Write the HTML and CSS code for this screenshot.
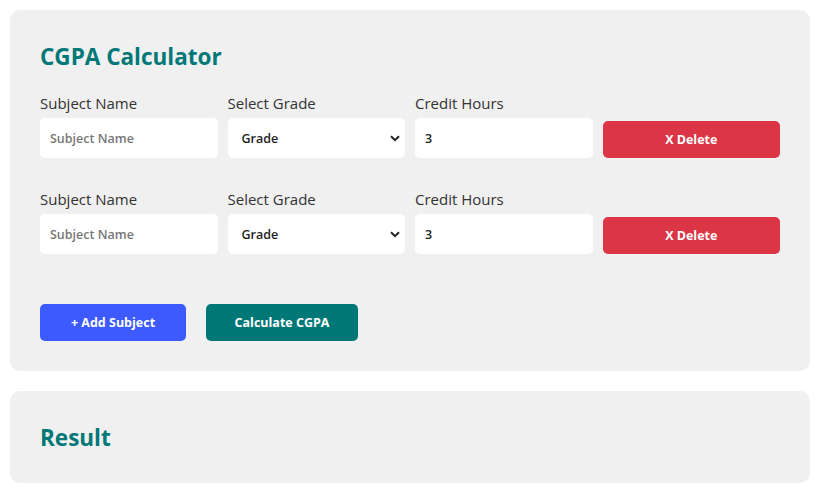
FILE: index.html
```html
<!DOCTYPE html>
<html lang="en">
<head>
<meta charset="utf-8">
<title>CGPA Calculator</title>
<link rel="stylesheet" href="styles.css">
</head>
<body>
<div class="card">
  <h2 class="title title-main">CGPA Calculator</h2>
  <div class="rows">
    <div class="row">
      <div class="field">
        <label class="label">Subject Name</label>
        <input class="control" type="text" placeholder="Subject Name">
      </div>
      <div class="field">
        <label class="label">Select Grade</label>
        <div class="select-wrap">
          <select class="control select"><option>Grade</option></select>
          <svg class="chevron" width="10" height="7" viewBox="0 0 10 7"><path d="M1 1.2 L5 5.2 L9 1.2" fill="none" stroke="#222" stroke-width="2"/></svg>
        </div>
      </div>
      <div class="field">
        <label class="label">Credit Hours</label>
        <input class="control" type="number" value="3">
      </div>
      <button class="btn btn-delete">X Delete</button>
    </div>
    <div class="row">
      <div class="field">
        <label class="label">Subject Name</label>
        <input class="control" type="text" placeholder="Subject Name">
      </div>
      <div class="field">
        <label class="label">Select Grade</label>
        <div class="select-wrap">
          <select class="control select"><option>Grade</option></select>
          <svg class="chevron" width="10" height="7" viewBox="0 0 10 7"><path d="M1 1.2 L5 5.2 L9 1.2" fill="none" stroke="#222" stroke-width="2"/></svg>
        </div>
      </div>
      <div class="field">
        <label class="label">Credit Hours</label>
        <input class="control" type="number" value="3">
      </div>
      <button class="btn btn-delete">X Delete</button>
    </div>
  </div>
  <div class="actions">
    <button class="btn btn-add">+ Add Subject</button>
    <button class="btn btn-calc">Calculate CGPA</button>
  </div>
</div>
<div class="card">
  <h2 class="title title-result">Result</h2>
</div>
</body>
</html>
```
FILE: styles.css
```css
* { box-sizing: border-box; }
body {
  margin: 10px 11px 10px 10px;
  font-family: "Open Sans", "Noto Sans", sans-serif;
  color: #333;
  background: #fff;
}
.card {
  background: #f0f0f0;
  border-radius: 10px;
  padding: 30px;
  margin-bottom: 20px;
}
.title {
  margin: 0;
  font-size: 22.5px;
  line-height: 32px;
  font-weight: 700;
  color: #007878;
}
.title-main { padding-top: 1px; }
.title-result { padding-top: 1px; margin-bottom: -1px; }
.rows {
  margin-top: 20px;
  display: flex;
  flex-direction: column;
  gap: 31px;
}
.row {
  display: grid;
  grid-template-columns: repeat(4, 1fr);
  gap: 10px;
  align-items: end;
}
.field {
  display: flex;
  flex-direction: column;
}
.label {
  font-size: 15px;
  line-height: 21px;
  margin-bottom: 4px;
  color: #333;
}
.control {
  width: 100%;
  height: 40px;
  border: none;
  border-radius: 5px;
  background: #fff;
  padding: 0 10px;
  font-family: inherit;
  font-size: 12.5px;
  font-weight: 600;
  color: #222;
  outline: none;
}
.control::placeholder { color: #777; }
input[type=number]::-webkit-inner-spin-button,
input[type=number]::-webkit-outer-spin-button { -webkit-appearance: none; margin: 0; }
.select-wrap { position: relative; }
.select {
  -webkit-appearance: none;
  appearance: none;
  padding-left: 14px;
}
.chevron {
  position: absolute;
  right: 5px;
  top: 17px;
  pointer-events: none;
}
.btn {
  height: 37px;
  border: none;
  border-radius: 5px;
  color: #fff;
  font-family: inherit;
  font-size: 12.5px;
  font-weight: 700;
  padding: 0 30px;
  cursor: pointer;
}
.btn-delete { background: #dc3545; width: 100%; }
.actions {
  margin-top: 50px;
  display: flex;
  gap: 20px;
}
.btn-add { background: #3d5afe; width: 146px; padding: 0; }
.btn-calc { background: #007777; width: 152px; padding: 0; }
```
